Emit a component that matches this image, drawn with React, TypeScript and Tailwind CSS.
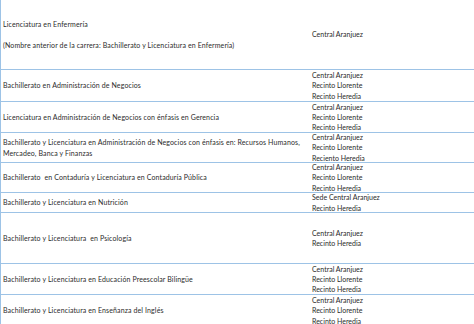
import React from 'react';

type Row = {
  h: string;
  left: React.ReactNode;
  right: string[];
};

const rows: Row[] = [
  {
    h: 'h-[70px]',
    left: (
      <>
        <div>Licenciatura en Enfermería</div>
        <div>&nbsp;</div>
        <div>(Nombre anterior de la carrera: Bachillerato y Licenciatura en Enfermería)</div>
      </>
    ),
    right: ['Central Aranjuez'],
  },
  {
    h: 'h-[32px]',
    left: 'Bachillerato en Administración de Negocios',
    right: ['Central Aranjuez', 'Recinto Llorente', 'Recinto Heredia'],
  },
  {
    h: 'h-[31px]',
    left: 'Licenciatura en Administración de Negocios con énfasis en Gerencia',
    right: ['Central Aranjuez', 'Recinto Llorente', 'Recinto Heredia'],
  },
  {
    h: 'h-[30px]',
    left: (
      <>
        <div>Bachillerato y Licenciatura en Administración de Negocios con énfasis en: Recursos Humanos,</div>
        <div>Mercadeo, Banca y Finanzas</div>
      </>
    ),
    right: ['Central Aranjuez', 'Recinto Llorente', 'Reciento Heredia'],
  },
  {
    h: 'h-[30px]',
    left: 'Bachillerato  en Contaduría y Licenciatura en Contaduría Pública',
    right: ['Central Aranjuez', 'Recinto Llorente', 'Recinto Heredia'],
  },
  {
    h: 'h-[20px]',
    left: 'Bachillerato y Licenciatura en Nutrición',
    right: ['Sede Central Aranjuez', 'Recinto Heredia'],
  },
  {
    h: 'h-[51px]',
    left: 'Bachillerato y Licenciatura  en Psicología',
    right: ['Central Aranjuez', 'Recinto Heredia'],
  },
  {
    h: 'h-[31px]',
    left: 'Bachillerato y Licenciatura en Educación Preescolar Bilingüe',
    right: ['Central Aranjuez', 'Recinto Llorente', 'Recinto Heredia'],
  },
  {
    h: 'h-[32px]',
    left: 'Bachillerato y Licenciatura en Enseñanza del Inglés',
    right: ['Central Aranjuez', 'Recinto Llorente', 'Recinto Heredia'],
  },
];

export default function App() {
  return (
    <div
      className="w-[474px] h-[324px] overflow-hidden bg-white text-[#2b2b2b] text-[7px] leading-[10.3px] border-l border-[#9dc3e6]"
      style={{ fontFamily: 'Lato, "Liberation Sans", sans-serif' }}
    >
      {rows.map((r, i) => (
        <div key={i} className={`flex border-b border-[#9dc3e6] ${r.h}`}>
          <div className="w-[311px] shrink-0 flex flex-col justify-center pl-[2px] whitespace-pre tracking-[0.12px]">
            {r.left}
          </div>
          <div className="flex-1 flex flex-col justify-center whitespace-pre">
            {r.right.map((t, j) => (
              <div key={j}>{t}</div>
            ))}
          </div>
        </div>
      ))}
    </div>
  );
}
